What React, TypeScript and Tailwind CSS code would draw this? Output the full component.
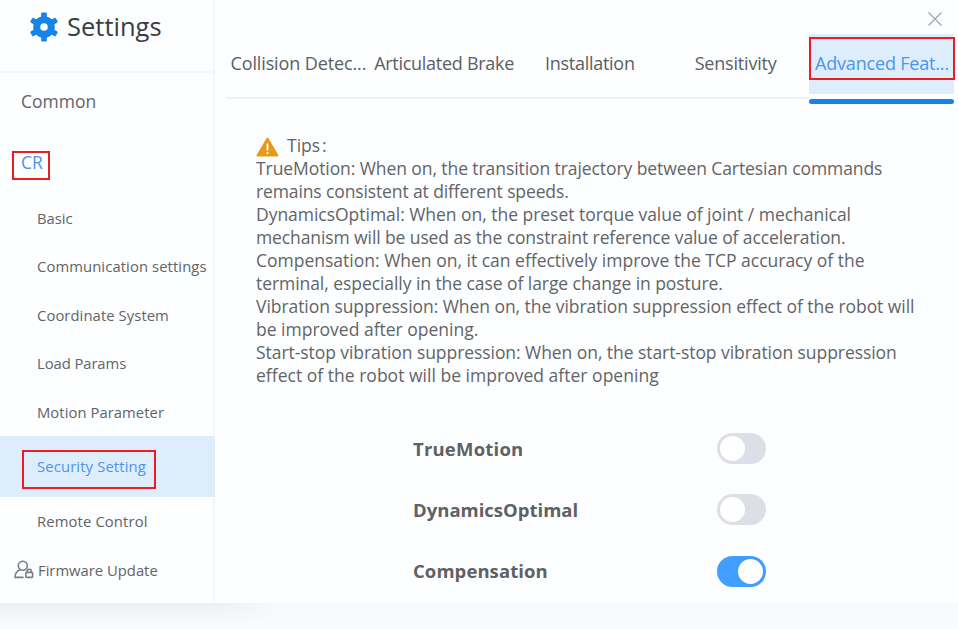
import type { ReactNode } from "react";

const navItems = [
  { label: "Basic", track: "tracking-[0px]" },
  { label: "Communication settings", track: "tracking-[0.1px]" },
  { label: "Coordinate System", track: "tracking-[0.08px]" },
  { label: "Load Params", track: "tracking-[-0.07px]" },
  { label: "Motion Parameter", track: "tracking-[0.06px]" },
];

const tabs = [
  { label: "Collision Detec...", track: "tracking-[-0.12px]" },
  { label: "Articulated Brake", track: "tracking-[-0.28px]" },
  { label: "Installation", track: "tracking-[-0.28px]" },
  { label: "Sensitivity", track: "tracking-[-0.2px]" },
];

const tips = [
  { text: "TrueMotion: When on, the transition trajectory between Cartesian commands", track: "tracking-[-0.08px]" },
  { text: "remains consistent at different speeds.", track: "tracking-[-0.12px]" },
  { text: "DynamicsOptimal: When on, the preset torque value of joint / mechanical", track: "tracking-[-0.03px]" },
  { text: "mechanism will be used as the constraint reference value of acceleration.", track: "tracking-[-0.1px]" },
  { text: "Compensation: When on, it can effectively improve the TCP accuracy of the", track: "tracking-[0px]" },
  { text: "terminal, especially in the case of large change in posture.", track: "tracking-[-0.06px]" },
  { text: "Vibration suppression: When on, the vibration suppression effect of the robot will", track: "tracking-[-0.05px]" },
  { text: "be improved after opening.", track: "tracking-[0px]" },
  { text: "Start-stop vibration suppression: When on, the start-stop vibration suppression", track: "tracking-[-0.06px]" },
  { text: "effect of the robot will be improved after opening", track: "tracking-[0.02px]" },
];

const switches = [
  { label: "TrueMotion", on: false, track: "tracking-[0.2px]" },
  { label: "DynamicsOptimal", on: false, track: "tracking-[0px]" },
  { label: "Compensation", on: true, track: "tracking-[0.07px]" },
];

function Marked({ frame, children }: { frame: string; children: ReactNode }) {
  return (
    <span className="relative">
      {children}
      <span className={`pointer-events-none absolute border-2 border-[#ed1c24] ${frame}`} />
    </span>
  );
}

function Gear() {
  return (
    <svg className="h-[30px] w-[30px]" viewBox="0 0 30 30" fill="#1683e8">
      <circle cx="15" cy="15" r="10.8" />
      {[0, 60, 120, 180, 240, 300].map((a) => (
        <rect key={a} x="12.2" y="0.4" width="5.6" height="7" rx="1.2" transform={`rotate(${a} 15 15)`} />
      ))}
      <circle cx="15" cy="15" r="3.8" fill="#fdfeff" />
    </svg>
  );
}

function UserLock() {
  return (
    <svg className="h-5 w-5" viewBox="0 0 20 20" fill="none" stroke="#7b7d80" strokeWidth="1.6">
      <circle cx="8.8" cy="5.8" r="4.5" />
      <path d="M6.2 9.6C3 11 1 13.6 1 17.4h8.6" />
      <rect x="11.8" y="12.4" width="6.8" height="5" rx="0.8" />
      <path d="M13 12.2v-0.8a2.2 2.2 0 0 1 4.4 0v0.8" />
    </svg>
  );
}

function Switch({ on }: { on: boolean }) {
  return (
    <div className={`flex h-[31px] w-[49px] items-center rounded-full px-[3px] ${on ? "justify-end bg-[#409eff]" : "bg-[#dcdfe6]"}`}>
      <div className="h-[25px] w-[25px] rounded-full bg-white" />
    </div>
  );
}

export default function App() {
  return (
    <div className="flex h-[629px] w-[958px] flex-col overflow-hidden whitespace-nowrap bg-[#fdfeff] font-['Open_Sans','Noto_Sans',sans-serif] text-[#626467]">
      <div className="flex h-[603px] shrink-0">
        <aside className="flex w-[215px] shrink-0 flex-col border-r-2 border-[#f5f7fa] text-[14.8px]">
          <div className="flex h-[73px] shrink-0 items-center border-b-2 border-[#f5f7fa] pb-[17px] pl-[29px] text-[25.5px] text-[#3a3d42]">
            <Gear />
            <span className="ml-2 pb-[2px]">Settings</span>
          </div>
          <div className="flex h-[56px] shrink-0 items-center pl-[21px] text-[17.5px]">Common</div>
          <div className="flex h-[65px] shrink-0 items-center pl-[21px] pt-[2px] text-[17.5px] text-[#4a95ee]">
            <Marked frame="-left-[9px] top-[2px] h-[29px] w-[38px]">CR</Marked>
          </div>
          {navItems.map((n) => (
            <div key={n.label} className="flex h-[48.4px] shrink-0 items-center pl-[37px]">
              <span className={n.track}>{n.label}</span>
            </div>
          ))}
          <div className="-mr-[2px] flex h-[61px] shrink-0 items-center bg-[#deedfc] pl-[37px] text-[#4a95ee]">
            <Marked frame="-left-[15px] -top-[5px] h-[39px] w-[134px]">
              <span className="tracking-[0.14px]">Security Setting</span>
            </Marked>
          </div>
          <div className="flex h-[49px] shrink-0 items-center pl-[37px] tracking-[0.13px]">Remote Control</div>
          <div className="flex h-[48px] shrink-0 items-center pl-[14px]">
            <UserLock />
            <span className="ml-1">Firmware Update</span>
          </div>
        </aside>

        <main className="flex min-w-0 flex-1 flex-col">
          <div className="flex h-[34px] shrink-0 items-center justify-end pr-[16px] pt-[4px]">
            <svg className="h-[14px] w-[14px]" viewBox="0 0 14 14" stroke="#a9acb1" strokeWidth="1.5" fill="none">
              <path d="M0.5 0.5l13 13M13.5 0.5l-13 13" />
            </svg>
          </div>
          <div className="ml-[11px] flex h-[70px] w-[728px] shrink-0 text-[18px] text-[#5b5e62]">
            {tabs.map((t) => (
              <div key={t.label} className="flex h-[65px] flex-1 items-center justify-center border-b-2 border-[#eff1f4] pb-[5px] pr-[1px]">
                <span className={t.track}>{t.label}</span>
              </div>
            ))}
            <div className="flex h-[70px] w-[145px] flex-col justify-between text-[#4a95ee]">
              <div className="flex h-[60px] items-center bg-[#deedfc] pb-[2px] pl-[6px]">
                <Marked frame="-left-[6px] -top-[13px] h-[43px] w-[146px]">
                  <span className="tracking-[-0.18px]">Advanced Feat...</span>
                </Marked>
              </div>
              <div className="h-[5px] rounded-full bg-[#1683e8]" />
            </div>
          </div>

          <section className="ml-[41px] mt-[30px] text-[17.5px] leading-[23px]">
            <div className="flex h-[23px] items-center">
              <svg className="mt-[2px] h-5 w-[23px]" viewBox="0 0 23 20">
                <path d="M11.5 1.5L21.5 18.5H1.5Z" fill="#e69a17" stroke="#e69a17" strokeWidth="2" strokeLinejoin="round" />
                <path d="M11.5 6.5v7M11.5 15v2" stroke="#fff" strokeWidth="1.8" />
              </svg>
              <span className="ml-2">Tips<span className="ml-[2px]">:</span></span>
            </div>
            {tips.map((t) => (
              <p key={t.text} className="h-[23px]">
                <span className={t.track}>{t.text}</span>
              </p>
            ))}
          </section>

          <section className="ml-[198px] mt-[31px] w-[353px] text-[18.5px] font-bold text-[#5f6164]">
            {switches.map((s) => (
              <div key={s.label} className="flex h-[61.3px] items-center justify-between">
                <span className={s.track}>{s.label}</span>
                <Switch on={s.on} />
              </div>
            ))}
          </section>
        </main>
      </div>
      <footer className="h-[26px] shrink-0 bg-gradient-to-b from-[#f7f8fa] to-[#fafbfd]">
        <div className="h-full w-[270px] bg-gradient-to-b from-[#eceff1] to-transparent to-80% [mask-image:linear-gradient(to_right,black_80%,transparent)]" />
      </footer>
    </div>
  );
}
